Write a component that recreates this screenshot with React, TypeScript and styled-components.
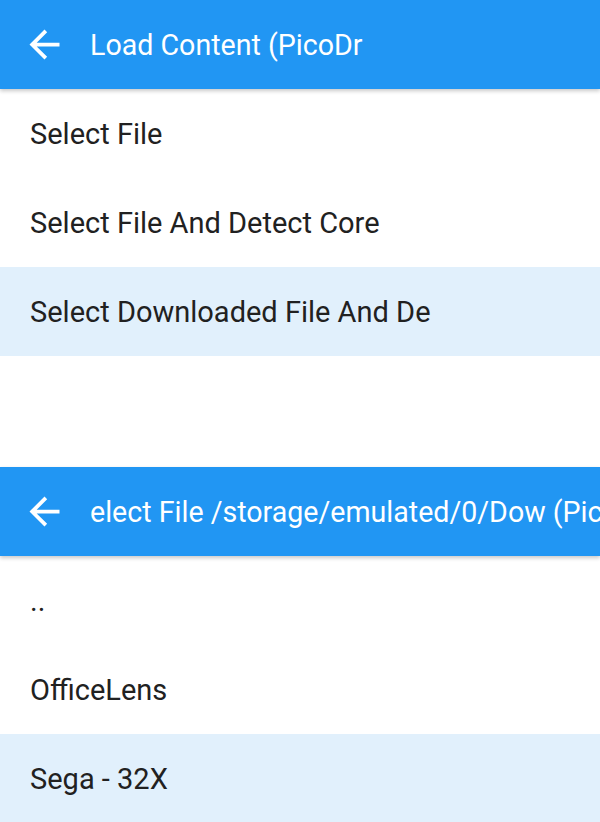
import styled, { createGlobalStyle } from "styled-components";

type Screen = {
  title: string;
  items: { label: string; selected?: boolean }[];
};

const screens: Screen[] = [
  {
    title: "Load Content (PicoDr",
    items: [
      { label: "Select File" },
      { label: "Select File And Detect Core" },
      { label: "Select Downloaded File And De", selected: true },
    ],
  },
  {
    title: "elect File /storage/emulated/0/Dow (PicoDrive)",
    items: [
      { label: ".." },
      { label: "OfficeLens" },
      { label: "Sega - 32X", selected: true },
    ],
  },
];

// Material "arrow_back"
function BackArrow() {
  return (
    <svg width="45" height="45" viewBox="0 0 24 24" fill="#fff">
      <path d="M20 11H7.83l5.59-5.59L12 4l-8 8 8 8 1.41-1.41L7.83 13H20v-2z" />
    </svg>
  );
}

export default function App() {
  return (
    <>
      <GlobalStyle />
      <Page>
        {screens.map((screen, i) => (
          <Section key={i} $gap={i > 0}>
            <TopBar>
              <BackButton>
                <BackArrow />
              </BackButton>
              <Title>{screen.title}</Title>
            </TopBar>
            <List>
              {screen.items.map((item) => (
                <Row key={item.label} $selected={item.selected}>
                  {item.label}
                </Row>
              ))}
            </List>
          </Section>
        ))}
      </Page>
    </>
  );
}

const GlobalStyle = createGlobalStyle`
  body {
    margin: 0;
    background: #fff;
    font-family: Roboto, "Noto Sans", sans-serif;
  }
`;

const Page = styled.div`
  width: 600px;
  height: 822px;
  overflow: hidden;
  display: flex;
  flex-direction: column;
`;

const Section = styled.div<{ $gap?: boolean }>`
  display: flex;
  flex-direction: column;
  margin-top: ${(p) => (p.$gap ? "111px" : "0")};
`;

const TopBar = styled.div`
  height: 89px;
  background: #2196f3;
  display: flex;
  align-items: center;
  box-shadow: 0 2px 4px rgba(0, 0, 0, 0.22);
  position: relative;
  z-index: 1;
  overflow: hidden;
`;

const BackButton = styled.div`
  width: 45px;
  height: 45px;
  margin-left: 22px;
  margin-right: 23px;
  flex-shrink: 0;
  display: flex;
`;

const Title = styled.div`
  color: #fff;
  font-size: 28.6px;
  white-space: nowrap;
  overflow: hidden;
  flex: 1;
`;

const List = styled.div`
  display: flex;
  flex-direction: column;
`;

const Row = styled.div<{ $selected?: boolean }>`
  height: 89px;
  display: flex;
  align-items: center;
  padding-left: 30px;
  font-size: 29px;
  color: #212121;
  background: ${(p) => (p.$selected ? "#e1f0fc" : "#fff")};
`;
